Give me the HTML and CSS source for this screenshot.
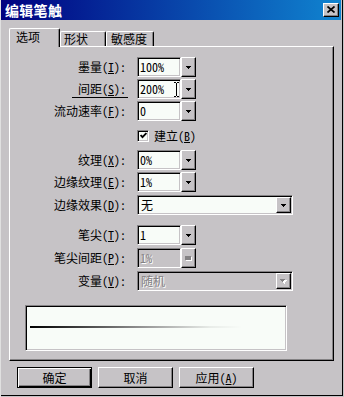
FILE: index.html
```html
<!DOCTYPE html>
<html lang="zh-CN">
<head>
<meta charset="utf-8">
<title>编辑笔触</title>
<link rel="stylesheet" href="styles.css">
</head>
<body>
<div class="window">
  <div class="titlebar">
    <span class="title">编辑笔触</span>
    <span class="close"><svg width="8" height="7" viewBox="0 0 8 7"><path d="M0.5 0.5 L7.5 6.5 M7.5 0.5 L0.5 6.5" stroke="#000" stroke-width="1.7" fill="none"/></svg></span>
  </div>

  <div class="tabs">
    <div class="tab active t1">选项</div>
    <div class="tab t2">形状</div>
    <div class="tab t3">敏感度</div>
  </div>

  <div class="panel">
    <div class="row">
      <span class="label">墨量(<u>I</u>):</span>
      <div class="field"><span class="input">100%</span><span class="dd"><svg class="arrow" width="5" height="3" viewBox="0 0 5 3" shape-rendering="crispEdges"><rect x="0" y="0" width="5" height="1"/><rect x="1" y="1" width="3" height="1"/><rect x="2" y="2" width="1" height="1"/></svg></span></div>
    </div>
    <div class="row g2">
      <span class="label focus">间距(<u>S</u>):</span>
      <div class="field"><span class="input">200%</span><span class="dd"><svg class="arrow" width="5" height="3" viewBox="0 0 5 3" shape-rendering="crispEdges"><rect x="0" y="0" width="5" height="1"/><rect x="1" y="1" width="3" height="1"/><rect x="2" y="2" width="1" height="1"/></svg></span>
        <svg class="ibeam" width="5" height="15" viewBox="0 0 5 15" shape-rendering="crispEdges"><rect x="0" y="0" width="2" height="1"/><rect x="3" y="0" width="2" height="1"/><rect x="2" y="1" width="1" height="13"/><rect x="0" y="14" width="2" height="1"/><rect x="3" y="14" width="2" height="1"/></svg>
      </div>
    </div>
    <div class="row g2">
      <span class="label">流动速率(<u>F</u>):</span>
      <div class="field"><span class="input">0</span><span class="dd"><svg class="arrow" width="5" height="3" viewBox="0 0 5 3" shape-rendering="crispEdges"><rect x="0" y="0" width="5" height="1"/><rect x="1" y="1" width="3" height="1"/><rect x="2" y="2" width="1" height="1"/></svg></span></div>
    </div>
    <div class="checkrow">
      <span></span>
      <div class="check"><span class="box"><svg width="7" height="7" viewBox="0 0 7 7"><polyline points="0.6,3 2.5,5.2 6.4,1" stroke="#000" stroke-width="1.8" fill="none"/></svg></span><span>建立(<u>B</u>)</span></div>
    </div>
    <div class="row g8">
      <span class="label">纹理(<u>X</u>):</span>
      <div class="field"><span class="input">0%</span><span class="dd"><svg class="arrow" width="5" height="3" viewBox="0 0 5 3" shape-rendering="crispEdges"><rect x="0" y="0" width="5" height="1"/><rect x="1" y="1" width="3" height="1"/><rect x="2" y="2" width="1" height="1"/></svg></span></div>
    </div>
    <div class="row g2">
      <span class="label">边缘纹理(<u>E</u>):</span>
      <div class="field"><span class="input">1%</span><span class="dd"><svg class="arrow" width="5" height="3" viewBox="0 0 5 3" shape-rendering="crispEdges"><rect x="0" y="0" width="5" height="1"/><rect x="1" y="1" width="3" height="1"/><rect x="2" y="2" width="1" height="1"/></svg></span></div>
    </div>
    <div class="row g3">
      <span class="label">边缘效果(<u>D</u>):</span>
      <div class="combo"><span class="ctext">无</span><span class="cbtn"><svg class="arrow" width="5" height="3" viewBox="0 0 5 3" shape-rendering="crispEdges"><rect x="0" y="0" width="5" height="1"/><rect x="1" y="1" width="3" height="1"/><rect x="2" y="2" width="1" height="1"/></svg></span></div>
    </div>
    <div class="row g10">
      <span class="label">笔尖(<u>T</u>):</span>
      <div class="field"><span class="input">1</span><span class="dd"><svg class="arrow" width="5" height="3" viewBox="0 0 5 3" shape-rendering="crispEdges"><rect x="0" y="0" width="5" height="1"/><rect x="1" y="1" width="3" height="1"/><rect x="2" y="2" width="1" height="1"/></svg></span></div>
    </div>
    <div class="row g3">
      <span class="label">笔尖间距(<u>P</u>):</span>
      <div class="field disabled"><span class="input">1%</span><span class="dd"><svg width="7" height="5" viewBox="0 0 7 5" shape-rendering="crispEdges"><rect x="1" y="1" width="6" height="4" fill="#fff"/><rect x="0" y="0" width="6" height="4" fill="#848284"/></svg></span></div>
    </div>
    <div class="row g3">
      <span class="label">变量(<u>V</u>):</span>
      <div class="combo disabled"><span class="ctext">随机</span><span class="cbtn"><svg width="7" height="5" viewBox="0 0 7 5" shape-rendering="crispEdges"><g fill="#fff"><rect x="1" y="1" width="6" height="1"/><rect x="2" y="2" width="4" height="1"/><rect x="3" y="3" width="2" height="1"/><rect x="4" y="4" width="1" height="1"/></g><g fill="#848284"><rect x="0" y="0" width="5" height="1"/><rect x="1" y="1" width="3" height="1"/><rect x="2" y="2" width="1" height="1"/></g></svg></span></div>
    </div>

    <div class="preview"><div class="stroke"></div></div>
  </div>

  <div class="buttons">
    <span class="btn default"><span class="btn-in">确定</span></span>
    <span class="btn"><span class="btn-in">取消</span></span>
    <span class="btn"><span class="btn-in">应用(<u>A</u>)</span></span>
  </div>
</div>
</body>
</html>
```

FILE: styles.css
```css
* { box-sizing: border-box; }
html, body { margin: 0; padding: 0; }
body {
  width: 344px;
  height: 397px;
  overflow: hidden;
  background: #c6c3c6;
  color: #000;
  font-family: "Noto Sans Mono CJK SC", "Noto Sans CJK SC", sans-serif;
  font-size: 12px;
}
u { text-decoration: underline; text-underline-offset: 1px; }

.window {
  width: 344px;
  height: 397px;
  padding: 0 3px 0 1px;
  background: #c6c3c6;
  box-shadow: inset 1px 0 #e0e0e0, inset -1px -1px #c6c3c6, inset -2px -2px #000;
  display: flex;
  flex-direction: column;
}

.titlebar {
  height: 20px;
  flex: none;
  display: flex;
  align-items: center;
  justify-content: space-between;
  padding: 0 2px 0 4px;
  background: linear-gradient(to right, #000080, #1084d0);
}
.title {
  color: #fff;
  font-family: "Noto Sans CJK SC", sans-serif;
  font-weight: bold;
  font-size: 14px;
  line-height: 20px;
  letter-spacing: 0.3px;
}
.close {
  width: 16px;
  height: 14px;
  display: flex;
  align-items: center;
  justify-content: center;
  background: #c6c3c6;
  border: 1px solid;
  border-color: #fff #000 #000 #fff;
  box-shadow: inset -1px -1px #848284;
  padding-bottom: 1px;
}

.tabs {
  flex: none;
  height: 18px;
  margin: 8px 0 0 8px;
  display: flex;
  align-items: flex-end;
  position: relative;
  z-index: 1;
}
.tab {
  height: 15px;
  background: #c6c3c6;
  border-top: 1px solid #fff;
  border-left: 1px solid #fff;
  border-right: 1px solid #000;
  box-shadow: inset -1px 0 #848284;
  border-radius: 2px 2px 0 0;
  line-height: 14px;
  white-space: nowrap;
}
.tab.active {
  height: 19px;
  margin-bottom: -1px;
  line-height: 15px;
}
.t1 { width: 51px; padding-left: 6px; }
.t2 { width: 46px; padding-left: 3px; }
.t3 { width: 48px; padding-left: 4px; }

.panel {
  flex: none;
  height: 315px;
  margin: 0 7px 0 8px;
  border-top: 1px solid #fff;
  border-left: 1px solid #fff;
  border-right: 1px solid #000;
  border-bottom: 1px solid #000;
  box-shadow: inset -1px -1px #848284;
  padding-top: 10px;
}

.row, .checkrow {
  display: grid;
  grid-template-columns: 118px auto;
  column-gap: 9px;
  align-items: center;
  justify-content: start;
}
.row { height: 20px; }
.g2 { margin-top: 2px; }
.g3 { margin-top: 3px; }
.g8 { margin-top: 8px; }
.g10 { margin-top: 10px; }

.label {
  text-align: right;
  padding-right: 2px;
  line-height: 20px;
  white-space: nowrap;
  position: relative;
}
.label.focus::after {
  content: "";
  position: absolute;
  right: 0;
  bottom: 1px;
  width: 56px;
  height: 1px;
  background: #000;
}

.field {
  display: flex;
  height: 20px;
  position: relative;
}
.input {
  width: 44px;
  height: 20px;
  background: #f8fcf8;
  border: 1px solid;
  border-color: #848284 #fff #fff #848284;
  box-shadow: inset 1px 1px #000, inset -1px -1px #c6c3c6;
  padding-left: 2px;
  line-height: 18px;
  white-space: nowrap;
}
.dd, .cbtn {
  width: 15px;
  height: 20px;
  display: flex;
  align-items: center;
  justify-content: center;
  background: #c6c3c6;
  border: 1px solid;
  border-color: #fff #000 #000 #fff;
  box-shadow: inset -1px -1px #848284;
}
.arrow { display: block; fill: #000; }
.ibeam {
  position: absolute;
  left: 37px;
  top: 3px;
  fill: #000;
}

.combo {
  width: 156px;
  height: 20px;
  display: flex;
  justify-content: space-between;
  align-items: center;
  background: #f8fcf8;
  border: 1px solid;
  border-color: #848284 #fff #fff #848284;
  box-shadow: inset 1px 1px #000, inset -1px -1px #c6c3c6;
  padding: 1px;
}
.ctext { padding-left: 2px; line-height: 16px; }
.combo .cbtn { width: 15px; height: 16px; }

.disabled .input, .combo.disabled { background: #c6c3c6; }
.disabled .input, .disabled .ctext {
  color: #848284;
  text-shadow: 1px 1px #fff;
}

.checkrow { margin-top: 8px; height: 13px; }
.check {
  display: flex;
  align-items: center;
  gap: 5px;
  height: 13px;
  line-height: 13px;
  white-space: nowrap;
}
.box {
  width: 12px;
  height: 12px;
  display: flex;
  align-items: center;
  justify-content: center;
  background: #f8fcf8;
  border: 1px solid;
  border-color: #848284 #fff #fff #848284;
  box-shadow: inset 1px 1px #000, inset -1px -1px #c6c3c6;
}

.preview {
  margin: 14px 0 0 15px;
  width: 262px;
  height: 46px;
  background: #f8fcf8;
  border: 1px solid;
  border-color: #848284 #fff #fff #848284;
  box-shadow: inset 1px 1px #000, inset -1px -1px #c6c3c6;
  padding: 20px 0 0 4px;
}
.stroke {
  width: 212px;
  height: 2px;
  background: linear-gradient(to right, #000 0%, #444 25%, #999 55%, #e8ece8 85%, #f8fcf8 100%);
}

.buttons {
  flex: none;
  display: flex;
  gap: 6px;
  margin: 6px 0 0 16px;
}
.btn {
  width: 75px;
  height: 21px;
  background: #c6c3c6;
  border: 1px solid;
  border-color: #fff #000 #000 #fff;
  box-shadow: inset -1px -1px #848284;
  display: flex;
}
.btn-in {
  flex: 1;
  display: flex;
  align-items: center;
  justify-content: center;
  line-height: 18px;
  white-space: nowrap;
}
.btn.default {
  border: 1px solid #000;
  box-shadow: inset 1px 1px #fff, inset -1px -1px #000, inset -2px -2px #848284;
}
```
